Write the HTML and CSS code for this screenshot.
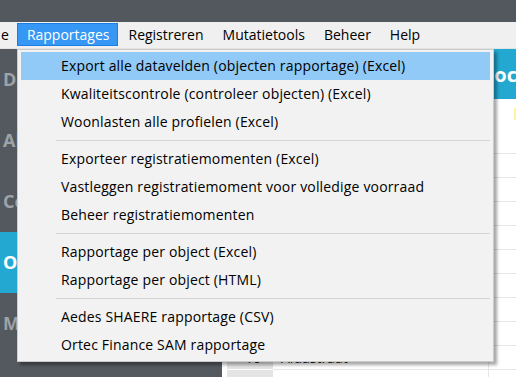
FILE: index.html
```html
<!DOCTYPE html>
<html lang="nl">
<head>
  <meta charset="UTF-8" />
  <title>Rapportages</title>
  <link rel="stylesheet" href="styles.css">
</head>
<body>
  <div class="titlebar"></div>
  <nav class="menubar">
    <span class="menu-item first">e</span>
    <span class="menu-item open">Rapportages</span>
    <span class="menu-item">Registreren</span>
    <span class="menu-item">Mutatietools</span>
    <span class="menu-item">Beheer</span>
    <span class="menu-item">Help</span>
  </nav>
  <div class="main">
    <aside class="sidebar">
      <div class="side-item">Dashboard</div>
      <div class="side-item">Algemeen</div>
      <div class="side-item">Complexen</div>
      <div class="side-item active">Objecten</div>
      <div class="side-item">Mutaties</div>
    </aside>
    <section class="content">
      <header class="content-head"><h1>Locaties</h1></header>
      <div class="toolbar"><span class="filter"></span></div>
      <table class="grid">
        <tr><td class="num"></td><td></td><td></td></tr>
        <tr><td class="num"></td><td></td><td></td></tr>
        <tr><td class="num"></td><td></td><td></td></tr>
        <tr><td class="num"></td><td></td><td></td></tr>
        <tr><td class="num"></td><td></td><td></td></tr>
        <tr><td class="num"></td><td></td><td></td></tr>
        <tr><td class="num"></td><td></td><td></td></tr>
        <tr><td class="num"></td><td></td><td></td></tr>
        <tr><td class="num"></td><td></td><td></td></tr>
        <tr><td class="num">10</td><td>Aldastraat</td><td></td></tr>
        <tr><td class="num"></td><td></td><td></td></tr>
      </table>
    </section>
  </div>

  <ul class="dropdown">
    <li class="hover">Export alle datavelden (objecten rapportage) (Excel)</li>
    <li>Kwaliteitscontrole (controleer objecten) (Excel)</li>
    <li>Woonlasten alle profielen (Excel)</li>
    <li class="sep"></li>
    <li>Exporteer registratiemomenten (Excel)</li>
    <li>Vastleggen registratiemoment voor volledige voorraad</li>
    <li>Beheer registratiemomenten</li>
    <li class="sep"></li>
    <li>Rapportage per object (Excel)</li>
    <li>Rapportage per object (HTML)</li>
    <li class="sep"></li>
    <li>Aedes SHAERE rapportage (CSV)</li>
    <li>Ortec Finance SAM rapportage</li>
  </ul>
</body>
</html>
```

FILE: styles.css
```css
* {
  margin: 0;
  padding: 0;
  box-sizing: border-box;
}
body {
  font-family: 'Open Sans', sans-serif;
  font-size: 14px;
  color: #000;
  background: #fff;
  height: 100vh;
  overflow: hidden;
  position: relative;
}
.titlebar {
  height: 22px;
  background: #52585e;
}
.menubar {
  display: flex;
  align-items: center;
  height: 27px;
  background: #f0f0f0;
  border-bottom: 1px solid #e3e3e3;
  padding-bottom: 1px;
}
.menu-item {
  height: 23px;
  line-height: 21px;
  padding: 0 8px 0 9px;
  border: 1px solid transparent;
}
.menu-item.first {
  padding: 0 7px 0 0;
}
.menu-item.open {
  background: #3797f4;
  border-color: #1a7ee2;
  color: #fff;
}
.main {
  display: flex;
  height: calc(100vh - 49px);
}
.sidebar {
  width: 222px;
  background: #53595f;
}
.side-item {
  height: 61px;
  line-height: 61px;
  padding-left: 3px;
  font-size: 18px;
  font-weight: bold;
  color: #9ea3a8;
  white-space: nowrap;
  overflow: hidden;
}
.side-item.active {
  background: #22a8d1;
  color: #fff;
}
.content {
  flex: 1;
  padding-left: 5px;
  overflow: hidden;
}
.content-head {
  height: 50px;
  background: #22a8d1;
  display: flex;
  align-items: center;
  padding-left: 256px;
}
.content-head h1 {
  font-size: 20px;
  color: #fff;
  font-weight: bold;
  white-space: nowrap;
}
.toolbar {
  height: 30px;
  display: flex;
  justify-content: flex-end;
  align-items: center;
}
.filter {
  width: 40px;
  height: 12px;
  margin-right: -38px;
  background: #fff3a0;
}
.grid {
  border-collapse: collapse;
  width: 100%;
}
.grid td {
  height: 24px;
  border-bottom: 1px solid #e6e6e6;
  padding: 0 8px;
  color: #222;
  font-size: 14px;
}
.grid td.num {
  width: 46px;
  background: #e4e4e4;
  border-bottom-color: #fff;
  padding-left: 18px;
}
.grid td:nth-child(2) {
  width: 215px;
  border-right: 1px solid #e6e6e6;
}
.dropdown {
  position: absolute;
  left: 17px;
  top: 49px;
  width: 477px;
  list-style: none;
  background: #f2f2f2;
  border: 1px solid #cccccc;
  padding: 2px 3px;
  box-shadow: 3px 3px 3px rgba(0, 0, 0, 0.35);
}
.dropdown li {
  height: 28px;
  line-height: 28px;
  padding-left: 40px;
  white-space: nowrap;
  letter-spacing: 0.17px;
}
.dropdown li.hover {
  background: #91c9f7;
}
.dropdown li.sep {
  height: 9px;
  margin-left: 35px;
  padding: 0;
  position: relative;
}
.dropdown li.sep::after {
  content: "";
  position: absolute;
  left: 0;
  right: 0;
  top: 4px;
  border-top: 1px solid #d5d5d5;
}
```
